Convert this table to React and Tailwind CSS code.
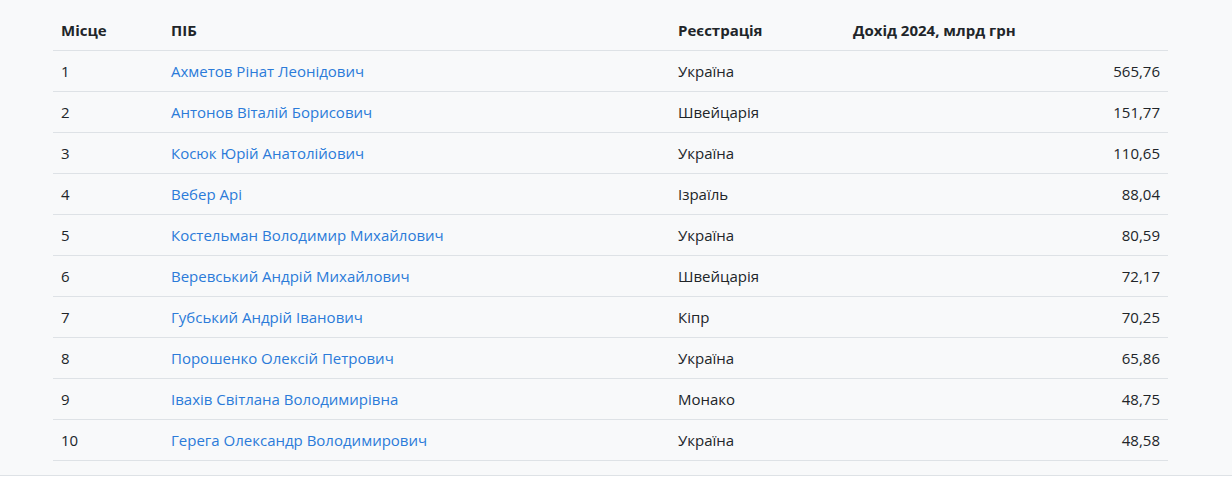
const rows = [
    [1, 'Ахметов Рінат Леонідович', 'Україна', '565,76'],
    [2, 'Антонов Віталій Борисович', 'Швейцарія', '151,77'],
    [3, 'Косюк Юрій Анатолійович', 'Україна', '110,65'],
    [4, 'Вебер Арі', 'Ізраїль', '88,04'],
    [5, 'Костельман Володимир Михайлович', 'Україна', '80,59'],
    [6, 'Веревський Андрій Михайлович', 'Швейцарія', '72,17'],
    [7, 'Губський Андрій Іванович', 'Кіпр', '70,25'],
    [8, 'Порошенко Олексій Петрович', 'Україна', '65,86'],
    [9, 'Івахів Світлана Володимирівна', 'Монако', '48,75'],
    [10, 'Герега Олександр Володимирович', 'Україна', '48,58'],
];

export default function App() {
    return (
        <div className="bg-white font-['Open_Sans',sans-serif] text-[15px] text-[#212529]">
            <div className="border-b border-[#dee2e6] bg-[#f8f9fa] pb-[14px] pl-[53px] pr-[64px] pt-[10px]">
                <table className="w-[1115px] table-fixed border-collapse">
                    <thead>
                        <tr className="border-b border-[#dee2e6] text-left">
                            <th className="w-[110px] px-2 py-2 font-bold leading-6">Місце</th>
                            <th className="w-[507px] px-2 py-2 font-bold leading-6">ПІБ</th>
                            <th className="w-[175px] px-2 py-2 font-bold leading-6">Реєстрація</th>
                            <th className="px-2 py-2 font-bold leading-6">Дохід 2024, млрд грн</th>
                        </tr>
                    </thead>
                    <tbody>
                        {rows.map(([n, name, country, income]) => (
                            <tr key={n} className="border-b border-[#dee2e6]">
                                <td className="px-2 py-2 leading-6">{n}</td>
                                <td className="px-2 py-2 leading-6">
                                    <a href="#" className="text-[#2b7bd9]">
                                        {name}
                                    </a>
                                </td>
                                <td className="px-2 py-2 leading-6">{country}</td>
                                <td className="px-2 py-2 text-right leading-6">{income}</td>
                            </tr>
                        ))}
                    </tbody>
                </table>
            </div>
        </div>
    );
}
